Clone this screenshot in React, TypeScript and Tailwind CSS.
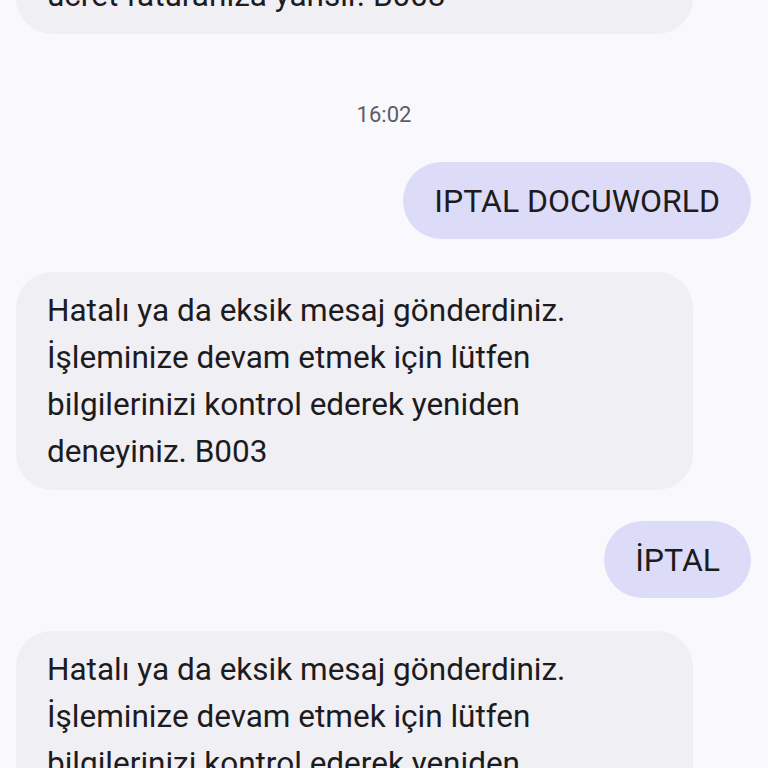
export default function App() {
  return (
    <div
      className="h-[768px] w-[768px] overflow-hidden bg-[#f8f8fd] text-[#1c1b20]"
      style={{ fontFamily: "Roboto, 'Noto Sans', sans-serif" }}
    >
      <div className="-mt-[43px] flex flex-col">
        <Incoming lines={["ücret faturanıza yansır. B003"]} />
        <div className="mt-[67px] text-center text-[22px] leading-[28px] text-[#5e5d65]">16:02</div>
        <div className="mt-[33px]">
          <Outgoing text="IPTAL DOCUWORLD" />
        </div>
        <div className="mt-[33px]">
          <Incoming
            lines={[
              "Hatalı ya da eksik mesaj gönderdiniz.",
              "İşleminize devam etmek için lütfen",
              "bilgilerinizi kontrol ederek yeniden",
              "deneyiniz. B003",
            ]}
          />
        </div>
        <div className="mt-[31px]">
          <Outgoing text="İPTAL" />
        </div>
        <div className="mt-[33px]">
          <Incoming
            lines={[
              "Hatalı ya da eksik mesaj gönderdiniz.",
              "İşleminize devam etmek için lütfen",
              "bilgilerinizi kontrol ederek yeniden",
              "deneyiniz. B003",
            ]}
          />
        </div>
      </div>
    </div>
  );
}

function Incoming({ lines }: { lines: string[] }) {
  return (
    <div className="ml-[16px] w-[677px] rounded-[36px] bg-[#f0eff4] px-[31px] py-[15px] text-[31.5px] leading-[47px]">
      {lines.map((l) => (
        <div key={l} className="whitespace-nowrap">
          {l}
        </div>
      ))}
    </div>
  );
}

function Outgoing({ text }: { text: string }) {
  return (
    <div className="mr-[17px] flex justify-end">
      <div className="flex h-[77px] items-center rounded-full bg-[#dddcf8] px-[31px] text-[32px] whitespace-nowrap">
        {text}
      </div>
    </div>
  );
}
